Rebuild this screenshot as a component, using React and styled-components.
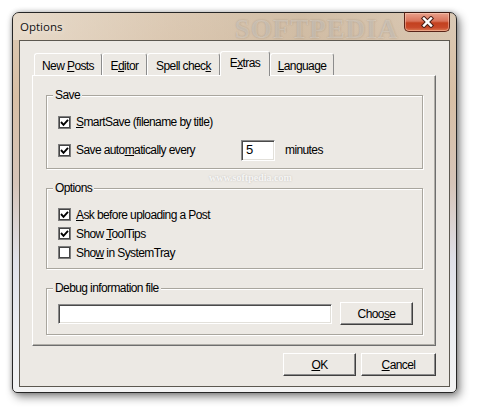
import styled, { createGlobalStyle } from "styled-components";

const GlobalStyle = createGlobalStyle`
  html, body {
    margin: 0;
    padding: 0;
    background: #fff;
  }
  body {
    font-family: "Liberation Sans", Arial, sans-serif;
  }
`;

const Page = styled.div`
  width: 477px;
  height: 414px;
  box-sizing: border-box;
  padding: 12px 0 0 12px;
  background: #fff;
  overflow: hidden;
`;

const Window = styled.div`
  position: relative;
  width: 445px;
  height: 381px;
  box-sizing: border-box;
  display: flex;
  flex-direction: column;
  border: 1px solid #262626;
  border-radius: 7px 7px 5px 5px;
  background: linear-gradient(
    to bottom,
    #dcc9b3 0%,
    #d8bfa5 22%,
    #d6c4b8 45%,
    #dfe0e8 65%,
    #eceef2 85%,
    #f3f3f3 100%
  );
  box-shadow: 3px 4px 10px rgba(0, 0, 0, 0.45), 0 0 5px rgba(0, 0, 0, 0.25);
`;

const TitleBar = styled.div`
  height: 27px;
  display: flex;
  align-items: flex-start;
  border-radius: 6px 6px 0 0;
  background: linear-gradient(
    to right,
    rgba(236, 226, 212, 0.7) 0%,
    rgba(220, 204, 184, 0.3) 35%,
    rgba(196, 176, 150, 0.45) 65%,
    rgba(214, 200, 184, 0.3) 100%
  );
`;

const Title = styled.span`
  padding: 6px 0 0 7px;
  font-family: "Open Sans", "Noto Sans", sans-serif;
  font-size: 11.5px;
  line-height: 15px;
  color: #111;
  text-shadow: 0 0 6px rgba(255, 255, 255, 0.9);
`;

const CloseButton = styled.div`
  margin: -1px 6px 0 auto;
  width: 46px;
  height: 20px;
  box-sizing: border-box;
  display: flex;
  align-items: center;
  justify-content: center;
  border: 1px solid #5a2418;
  border-top-color: #3a1810;
  border-radius: 0 0 5px 5px;
  background: linear-gradient(
    to bottom,
    #e9a18c 0%,
    #d9735a 45%,
    #c3411f 55%,
    #c8492a 80%,
    #dc7a52 100%
  );
  box-shadow: inset 0 0 0 1px rgba(255, 220, 200, 0.45);
`;

const Client = styled.div`
  flex: 1;
  margin: 0 6px 5px 6px;
  box-sizing: border-box;
  display: flex;
  flex-direction: column;
  padding: 10px 13px 0 12px;
  border: 1px solid #5c5850;
  background: #ece9e4;
  font-size: 12px;
  letter-spacing: -0.6px;
  color: #000;
`;

const TabRow = styled.div`
  height: 24px;
  display: flex;
  align-items: flex-end;
  padding-left: 2px;
`;

const Tab = styled.div`
  position: relative;
  width: ${(p) => p.w}px;
  height: ${(p) => (p.active ? 25 : 22)}px;
  margin-bottom: ${(p) => (p.active ? -1 : 0)}px;
  z-index: ${(p) => (p.active ? 1 : 0)};
  box-sizing: border-box;
  padding-top: ${(p) => (p.active ? 1 : 2)}px;
  text-align: center;
  line-height: 20px;
  border-top: 1px solid #fff;
  border-left: 1px solid #fff;
  border-right: 1px solid #8c8c8c;
  border-radius: 3px 3px 0 0;
  background: #ece9e4;
`;

const Panel = styled.div`
  height: 271px;
  box-sizing: border-box;
  display: flex;
  flex-direction: column;
  gap: 12px;
  padding: 12px 12px 0 13px;
  border: 1px solid;
  border-color: #fff #6e6e6e #6e6e6e #fff;
  box-shadow: inset -1px -1px 0 #b0aea8;
`;

const Group = styled.fieldset`
  margin: 0;
  padding: 0;
  min-width: 0;
  border: 1px solid #a9a69e;
  box-shadow: inset 1px 1px 0 #fff, 1px 1px 0 #fff;
`;

const Legend = styled.legend`
  margin-left: 6px;
  padding: 0 2px;
  line-height: 14px;
  background: #ece9e4;
`;

const GroupBody = styled.div`
  display: flex;
  flex-direction: column;
  gap: ${(p) => p.gap || 0}px;
  padding: ${(p) => p.pad};
`;

const Row = styled.label`
  height: ${(p) => p.h || 20}px;
  display: flex;
  align-items: center;
  gap: 5px;
`;

const Box = styled.span`
  width: 13px;
  height: 13px;
  flex: none;
  box-sizing: border-box;
  display: flex;
  align-items: center;
  justify-content: center;
  border: 1px solid #7d7d7d;
  box-shadow: inset 0 0 0 1px #454545;
  background: #fff;
`;

const FixedLabel = styled.span`
  width: 160px;
  flex: none;
`;

const NumberField = styled.div`
  width: 34px;
  height: 21px;
  box-sizing: border-box;
  padding-left: 4px;
  line-height: 17px;
  border: 1px solid;
  border-color: #8a8a8a #fff #fff #8a8a8a;
  box-shadow: inset 1px 1px 0 #4a4a4a, inset -1px -1px 0 #e2e0da;
  background: #fff;
  font-size: 13px;
`;

const After = styled.span`
  margin-left: 5px;
`;

const FileRow = styled.div`
  height: 23px;
  display: flex;
  align-items: center;
  gap: 8px;
`;

const TextField = styled.div`
  width: 274px;
  height: 20px;
  box-sizing: border-box;
  border: 1px solid;
  border-color: #8a8a8a #fff #fff #8a8a8a;
  box-shadow: inset 1px 1px 0 #4a4a4a, inset -1px -1px 0 #e2e0da;
  background: #fff;
`;

const Button = styled.div`
  width: ${(p) => p.w}px;
  height: 23px;
  box-sizing: border-box;
  display: flex;
  align-items: center;
  justify-content: center;
  border: 1px solid;
  border-color: #fff #404040 #404040 #fff;
  box-shadow: inset -1px -1px 0 #8c8c8c;
  background: #ece9e4;
`;

const ButtonRow = styled.div`
  margin-top: 7px;
  display: flex;
  justify-content: flex-end;
  gap: 5px;
`;

const Watermark = styled.div`
  position: absolute;
  left: ${(p) => p.x}px;
  top: ${(p) => p.y}px;
  pointer-events: none;
  font-family: "Liberation Serif", serif;
  font-weight: bold;
  font-size: ${(p) => p.size}px;
  letter-spacing: ${(p) => p.spacing || 0}px;
  color: ${(p) => p.color};
  text-shadow: 0 0 2px rgba(0, 0, 0, 0.18);
  white-space: nowrap;
`;

const Check = () => (
  <svg width="9" height="9" viewBox="0 0 9 9">
    <polyline points="1,4 3.5,6.8 8,1.8" fill="none" stroke="#000" strokeWidth="1.9" />
  </svg>
);

const CloseGlyph = () => (
  <svg width="15" height="12" viewBox="0 0 15 12">
    <g strokeLinecap="square">
      <line x1="4" y1="2.5" x2="11" y2="9.5" stroke="#4a2018" strokeWidth="4.4" />
      <line x1="11" y1="2.5" x2="4" y2="9.5" stroke="#4a2018" strokeWidth="4.4" />
      <line x1="4" y1="2.5" x2="11" y2="9.5" stroke="#fff" strokeWidth="2.4" />
      <line x1="11" y1="2.5" x2="4" y2="9.5" stroke="#fff" strokeWidth="2.4" />
    </g>
  </svg>
);

function CheckRow({ checked, h, children }) {
  return (
    <Row h={h}>
      <Box>{checked && <Check />}</Box>
      {children}
    </Row>
  );
}

const tabs = [
  { key: "posts", w: 68, label: <>New <u>P</u>osts</> },
  { key: "editor", w: 45, label: <>E<u>d</u>itor</> },
  { key: "spell", w: 73, label: <>Spell chec<u>k</u></> },
  { key: "extras", w: 50, label: <>E<u>x</u>tras</>, active: true },
  { key: "lang", w: 64, label: <><u>L</u>anguage</> },
];

export default function App() {
  return (
    <>
      <GlobalStyle />
      <Page>
        <Window>
          <TitleBar>
            <Title>Options</Title>
            <CloseButton>
              <CloseGlyph />
            </CloseButton>
          </TitleBar>
          <Client>
            <TabRow>
              {tabs.map((t) => (
                <Tab key={t.key} w={t.w} active={t.active}>
                  {t.label}
                </Tab>
              ))}
            </TabRow>
            <Panel>
              <Group>
                <Legend>Save</Legend>
                <GroupBody pad="10px 0 8px 11px" gap={8}>
                  <CheckRow checked>
                    <span><u>S</u>martSave (filename by title)</span>
                  </CheckRow>
                  <CheckRow checked>
                    <FixedLabel>Save auto<u>m</u>atically every</FixedLabel>
                    <NumberField>5</NumberField>
                    <After>minutes</After>
                  </CheckRow>
                </GroupBody>
              </Group>
              <Group>
                <Legend>Options</Legend>
                <GroupBody pad="10px 0 6px 11px">
                  <CheckRow checked h={19}>
                    <span><u>A</u>sk before uploading a Post</span>
                  </CheckRow>
                  <CheckRow checked h={19}>
                    <span>Show <u>T</u>oolTips</span>
                  </CheckRow>
                  <CheckRow h={19}>
                    <span>Sho<u>w</u> in SystemTray</span>
                  </CheckRow>
                </GroupBody>
              </Group>
              <Group>
                <Legend>Debug information file</Legend>
                <GroupBody pad="7px 0 9px 11px">
                  <FileRow>
                    <TextField />
                    <Button w={73}>
                      <span>Choo<u>s</u>e</span>
                    </Button>
                  </FileRow>
                </GroupBody>
              </Group>
            </Panel>
            <ButtonRow>
              <Button w={73}>
                <span><u>O</u>K</span>
              </Button>
              <Button w={75}>
                <span><u>C</u>ancel</span>
              </Button>
            </ButtonRow>
          </Client>
          <Watermark x={222} y={1} size={27} spacing={1} color="rgba(255, 255, 255, 0.28)">
            SOFTPEDIA
          </Watermark>
          <Watermark x={196} y={159} size={10} color="rgba(255, 255, 255, 0.8)">
            www.softpedia.com
          </Watermark>
        </Window>
      </Page>
    </>
  );
}
